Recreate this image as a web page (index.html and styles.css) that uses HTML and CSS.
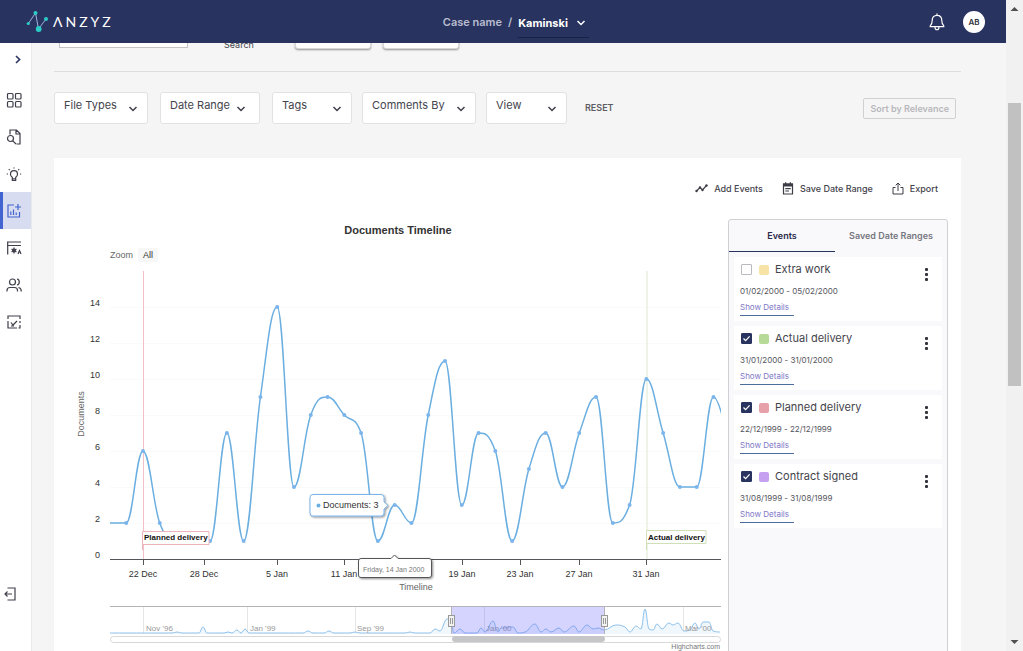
FILE: index.html
```html
<!DOCTYPE html>
<html lang="en">
<head>
<meta charset="utf-8">
<title>Anzyz – Timeline</title>
<link rel="stylesheet" href="styles.css">
</head>
<body>
<div class="app">
  <header class="topbar">
    <a class="logo" href="#" aria-label="Anzyz home">
      <svg class="logo-mark" width="23" height="23" viewBox="0 0 23 23" aria-hidden="true">
        <path d="M2 14 9.500 3 12.500 19 20 9" fill="none" stroke="#9db4d6" stroke-width="1"/>
        <g fill="#2bcbc8"><circle cx="2.300" cy="13.500" r="1.600"/><circle cx="9.500" cy="3" r="2"/><circle cx="12.700" cy="19" r="2.900"/><circle cx="20" cy="9" r="2"/></g>
      </svg>
      <span class="logo-text">ΛNZYZ</span>
    </a>
    <div class="crumbs">
      <label for="case">Case name</label>
      <span class="slash">/</span>
      <span class="case-pick">
        <select id="case"><option>Kaminski</option></select>
        <svg width="10" height="6" viewBox="0 0 10 6" aria-hidden="true"><path d="M1.500 1 5 4.500 8.500 1"/></svg>
      </span>
    </div>
    <div class="account">
      <button class="bell" aria-label="Notifications">
        <svg width="16" height="18" viewBox="0 0 16 18" fill="none" stroke="#fff" stroke-width="1.200" stroke-linecap="round" stroke-linejoin="round" aria-hidden="true"><path d="M8 .8v1.400M3.200 7.500C3.200 4.300 5 2.300 8 2.300s4.800 2 4.800 5.200c0 3.500 1 4.500 2 5.400v.8H1.200v-.8c1-.9 2-1.900 2-5.400zM6 14.200c0 1.600.8 2.500 2 2.500s2-.9 2-2.500"/></svg>
      </button>
      <button class="avatar" aria-label="Account">AB</button>
    </div>
  </header>

  <nav class="sidebar" aria-label="Sections">
    <button class="expand" aria-label="Expand menu"><svg width="6" height="9" viewBox="0 0 6 9"><path d="M1 1l3.600 3.500L1 8"/></svg></button>
    <a class="item" href="#" aria-label="Dashboard"><svg viewBox="0 0 16 16"><rect x="1.500" y="1.500" width="5.500" height="5.500" rx="1"/><rect x="9.500" y="1.500" width="5.500" height="5.500" rx="1"/><rect x="1.500" y="9.500" width="5.500" height="5.500" rx="1"/><rect x="9.500" y="9.500" width="5.500" height="5.500" rx="1"/></svg></a>
    <a class="item" href="#" aria-label="Document search"><svg viewBox="0 0 16 16"><path d="M4 5.500V1h6.500L14 4.500V15h-3.500M10 1v4h4M6.800 11.800 10 15"/><circle cx="4.500" cy="9.500" r="3"/></svg></a>
    <a class="item" href="#" aria-label="Insights"><svg viewBox="0 0 16 16"><path d="M6.300 11.300C5 10.500 4.500 9.500 4.500 8.200a3.500 3.500 0 0 1 7 0c0 1.300-.5 2.300-1.800 3.100v3.200H6.300zM6.300 12.800h3.400M8 1.500v1M2.800 3.200l.9.900M13.200 3.200l-.9.900M.8 8h1.200M14 8h1.200"/></svg></a>
    <a class="item active" href="#" aria-label="Timeline" aria-current="page"><svg viewBox="0 0 16 16"><path d="M8 2H2v12h11.500V9M4.800 8.500V12M7.500 6.500V12M10.200 9.500V12M12 1v6M9 4h6"/></svg></a>
    <a class="item" href="#" aria-label="Processing"><svg viewBox="0 0 16 16"><path d="M1 2h14M1 5.500h14M1.700 2v12.500M8 7.500v6M5.500 9l5 3M10.500 9l-5 3M12 14l1.500-3.500L15 14"/><circle cx="8" cy="10.500" r="1.300"/></svg></a>
    <a class="item" href="#" aria-label="People"><svg viewBox="0 0 16 16"><circle cx="6.500" cy="5" r="3"/><path d="M1 14.500v-1c0-2 1.500-3 3-3h4.500c1.500 0 3 1 3 3v1M11 2c3 .3 3 5.500 0 6M12.500 10.500c2 .4 2.800 1.500 2.800 4"/></svg></a>
    <a class="item" href="#" aria-label="Reports"><svg viewBox="0 0 16 16"><path d="M2 5V2h12v3M14 7v2M2 7v7h9M14 11v3h-1.500M5 8.500 7 11l4-4M5 12h3"/></svg></a>
    <a class="leave" href="#" aria-label="Log out"><svg viewBox="0 0 12 14"><path d="M3.500 1H11v12H3.500M8 7H1M3.500 4.500 1 7l2.500 2.500"/></svg></a>
  </nav>

  <main class="main">
    <div class="search-row">
      <input class="search-box" type="text" aria-label="Query">
      <span class="search-label">Search</span>
      <button class="raised" aria-label="Run search"></button>
      <button class="raised" aria-label="Clear search"></button>
    </div>

    <div class="filters">
      <span class="pick pick-types"><select aria-label="File Types"><option>File Types</option></select><svg viewBox="0 0 10 6"><path d="M1.500 1 5 4.500 8.500 1"/></svg></span>
      <span class="pick pick-range"><select aria-label="Date Range"><option>Date Range</option></select><svg viewBox="0 0 10 6"><path d="M1.500 1 5 4.500 8.500 1"/></svg></span>
      <span class="pick pick-tags"><select aria-label="Tags"><option>Tags</option></select><svg viewBox="0 0 10 6"><path d="M1.500 1 5 4.500 8.500 1"/></svg></span>
      <span class="pick pick-comments"><select aria-label="Comments By"><option>Comments By</option></select><svg viewBox="0 0 10 6"><path d="M1.500 1 5 4.500 8.500 1"/></svg></span>
      <span class="pick pick-view"><select aria-label="View"><option>View</option></select><svg viewBox="0 0 10 6"><path d="M1.500 1 5 4.500 8.500 1"/></svg></span>
      <button class="reset">RESET</button>
      <button class="sort" disabled>Sort by Relevance</button>
    </div>

    <section class="card">
      <div class="actions">
        <button><svg width="13" height="12" viewBox="0 0 13 12"><path d="M1.500 9 5 5.500 7.500 8 11.500 3.500" fill="none" stroke="#3c3c46" stroke-width="1.200"/><g fill="#3c3c46"><circle cx="1.500" cy="9" r="1.200"/><circle cx="5" cy="5.500" r="1.200"/><circle cx="7.500" cy="8" r="1.200"/><circle cx="11.500" cy="3.500" r="1.200"/></g></svg>Add Events</button>
        <button class="save"><svg width="12" height="13" viewBox="0 0 12 13"><path d="M1.500 2h9v10h-9z" fill="none" stroke="#3c3c46" stroke-width="1.200"/><path d="M1 1.500h10v3H1zM3 .3h1.200v2H3zM7.800.3H9v2H7.800z" fill="#3c3c46"/><path d="M3.300 6.700h5.400M3.300 9h3.700" stroke="#3c3c46" stroke-width="1.200"/></svg>Save Date Range</button>
        <button class="export"><svg width="12" height="13" viewBox="0 0 12 13" fill="none" stroke="#3c3c46"><path d="M3.500 5.500h-2.500v6.500h10V5.500H8.500M6 9V1.200M3.700 3.300 6 1l2.300 2.300"/></svg>Export</button>
      </div>

      <div class="columns">
        <svg class="chart" id="chart" viewBox="54 219 667 432" role="img" aria-label="Documents Timeline">
          <defs>
            <clipPath id="plot"><rect x="110" y="268" width="611" height="300"/></clipPath>
            <filter id="lift" x="-20%" y="-40%" width="140%" height="190%"><feDropShadow dx="1" dy="1" stdDeviation="1" flood-opacity=".45"/></filter>
          </defs>
          <text class="title" x="398" y="234">Documents Timeline</text>
          <text class="tick-label soft" x="110" y="258">Zoom</text>
          <rect x="138" y="248" width="20" height="14" rx="2" fill="#f7f7f7"/>
          <text class="tick-label strong middle" x="148" y="258">All</text>
          <g id="grid" stroke="#fafafa"></g>
          <path d="M143.500 271V559" stroke="#f3bfc8"/>
          <path d="M647 271V559" stroke="#dfe8d0"/>
          <path d="M110 559.500H721" stroke="#55555a"/>
          <g id="y-labels" class="tick-label end"></g>
          <g id="x-ticks" class="tick-label middle"></g>
          <text class="tick-label soft middle" transform="translate(84 414) rotate(-90)">Documents</text>
          <text class="tick-label soft middle" x="416" y="590">Timeline</text>
          <g clip-path="url(#plot)">
            <path id="series" fill="none" stroke="#6baee0" stroke-width="1.500"/>
            <g id="markers" fill="#7cb5ec"></g>
          </g>
          <g class="flag">
            <path d="M142.500 550V531.500H209V544.500H142.500" fill="#fff" stroke="#ecb3b8"/>
            <text x="144" y="540">Planned delivery</text>
            <path d="M646.500 550V530.500H706V543.500H646.500" fill="#fff" stroke="#cfe0b8"/>
            <text x="648" y="540">Actual delivery</text>
          </g>
          <g>
            <path d="M313 494.500H381q3 0 3 3V502l4 3.500-4 3.500v4q0 3-3 3H313q-3 0-3-3V497.500q0-3 3-3z" fill="#fff" stroke="#7cb5ec" filter="url(#lift)"/>
            <circle cx="318.500" cy="505.500" r="2" fill="#6baee0"/>
            <text class="tick-label" x="323" y="508">Documents: 3</text>
            <path d="M361 558.500H391l3.500-3.500 3.500 3.500H429q2.500 0 2.500 2.500V575q0 2.500-2.500 2.500H361q-2.500 0-2.500-2.500V561q0-2.500 2.500-2.500z" fill="#fff" stroke="#55555a" filter="url(#lift)"/>
            <text class="tiny" x="363" y="572">Friday, 14 Jan 2000</text>
          </g>
          <g>
            <path d="M143.500 607V634M247.500 607V634M355.500 607V634M484.500 607V634M683.500 607V634" stroke="#e6e6e6"/>
            <path id="nav-fill" fill="#f0f7fd"/>
            <path id="nav-line" fill="none" stroke="#8fc1ea"/>
            <g class="nav-label">
              <text x="146" y="631">Nov '96</text><text x="250" y="631">Jan '99</text><text x="357" y="631">Sep '99</text><text x="486" y="631">Jan '00</text><text x="685" y="631">Mar '00</text>
            </g>
            <rect x="451" y="607" width="154" height="27" fill="#6666ff" fill-opacity=".28"/>
            <path d="M110 606.500H721M451.500 606V634M604.500 606V634" stroke="#b3b3b8" fill="none"/>
            <rect x="110.500" y="636.500" width="610" height="6" rx="3" fill="#fff" stroke="#d8d8d8"/>
            <rect x="452" y="636" width="153" height="6" rx="3" fill="#c6c6c8"/>
            <g fill="#f2f2f2" stroke="#999">
              <rect x="448.500" y="615.500" width="6" height="11"/><rect x="601.500" y="615.500" width="6" height="11"/>
              <path d="M450.500 618v6M452.500 618v6M603.500 618v6M605.500 618v6"/>
            </g>
            <text class="tiny end" x="720" y="649">Highcharts.com</text>
          </g>
        </svg>

        <aside class="events">
          <div class="tabs" role="tablist">
            <button role="tab" aria-selected="true">Events</button>
            <button role="tab" aria-selected="false">Saved Date Ranges</button>
          </div>
          <ul class="event-list">
            <li class="event">
              <div><label class="name"><input type="checkbox"><i class="swatch yellow"></i>Extra work</label>
              <p class="dates">01/02/2000 - 05/02/2000</p><a class="details" href="#">Show Details</a></div>
              <button class="kebab" aria-label="More options for Extra work"><i></i><i></i><i></i></button>
            </li>
            <li class="event">
              <div><label class="name"><input type="checkbox" checked><i class="swatch green"></i>Actual delivery</label>
              <p class="dates">31/01/2000 - 31/01/2000</p><a class="details" href="#">Show Details</a></div>
              <button class="kebab" aria-label="More options for Actual delivery"><i></i><i></i><i></i></button>
            </li>
            <li class="event">
              <div><label class="name"><input type="checkbox" checked><i class="swatch red"></i>Planned delivery</label>
              <p class="dates">22/12/1999 - 22/12/1999</p><a class="details" href="#">Show Details</a></div>
              <button class="kebab" aria-label="More options for Planned delivery"><i></i><i></i><i></i></button>
            </li>
            <li class="event">
              <div><label class="name"><input type="checkbox" checked><i class="swatch purple"></i>Contract signed</label>
              <p class="dates">31/08/1999 - 31/08/1999</p><a class="details" href="#">Show Details</a></div>
              <button class="kebab" aria-label="More options for Contract signed"><i></i><i></i><i></i></button>
            </li>
          </ul>
        </aside>
      </div>
    </section>
  </main>

  <div class="scrollbar" aria-hidden="true">
    <svg viewBox="0 0 17 17"><path d="M4.500 11 8.500 7l4 4z"/></svg>
    <span class="before"></span><span class="thumb"></span><span class="after"></span>
    <svg viewBox="0 0 17 17"><path d="M4.500 6 8.500 10l4-4z"/></svg>
  </div>
</div>
<script src="chart.js"></script>
</body>
</html>
```

FILE: styles.css
```css
* { box-sizing: border-box; }

body {
  margin: 0;
  font-family: Inter, "Liberation Sans", sans-serif;
  color: #44444c;
  background: #f5f5f5;
}

button, select, input { font: inherit; color: inherit; }
button { padding: 0; border: 0; background: none; cursor: pointer; }
a { color: inherit; text-decoration: none; }
svg { display: block; flex: none; }

.app {
  display: grid;
  grid-template: 43px minmax(0, 1fr) / 32px minmax(0, 1fr) 17px;
  height: 100vh;
}

/* Top bar */
.topbar {
  grid-column: 1 / 3;
  display: grid;
  grid-template-columns: 1fr auto 1fr;
  align-items: center;
  padding-left: 26px;
  background: #29335f;
  color: #fff;
  z-index: 1;
}
.logo { display: flex; align-items: center; gap: 4px; }
.logo-text { font: 14px/20px Lato, sans-serif; letter-spacing: 3px; }
.crumbs { display: flex; align-items: center; gap: 6px; font-size: 11px; font-weight: 600; line-height: 16px; }
.crumbs label, .slash { color: #b9bdd0; }
.case-pick {
  display: flex;
  align-items: center;
  gap: 8px;
  padding: 6px 3px 6px 0;
  border-bottom: 1px solid #1a2145;
  margin-top: 4px;
}
.case-pick select, .pick select { appearance: none; border: 0; padding: 0; background: none; outline: 0; }
.case-pick select { font-weight: 700; color: #fff; }
.case-pick svg { fill: none; stroke: #fff; stroke-width: 1.5; pointer-events: none; }
.account { display: flex; justify-content: flex-end; align-items: center; gap: 18px; padding-right: 21px; }
.avatar { width: 22px; height: 22px; border-radius: 50%; background: #fff; color: #33333d; font-size: 8px; font-weight: 600; }

/* Side navigation */
.sidebar {
  display: flex;
  flex-direction: column;
  background: #fff;
  border-right: 1px solid #e9e9ec;
}
.sidebar svg { fill: none; stroke: #3f3f4b; stroke-width: 1.2; }
.expand { display: flex; align-items: center; height: 32px; margin-bottom: 6px; padding-left: 15px; }
.expand svg { stroke: #29335f; stroke-width: 1.6; }
.item { display: flex; align-items: center; height: 37px; padding-left: 6px; }
.item svg { width: 16px; height: 16px; }
.item.active { padding-left: 3px; border-left: 3px solid #4264d0; background: #d7dcf0; }
.item.active svg { stroke: #4264d0; }
.leave { margin: auto 0 50px 4px; }
.leave svg { width: 12px; height: 14px; }

/* Main column */
.main { overflow-y: auto; scrollbar-width: none; padding: 0 45px 0 22px; }

.search-row {
  display: flex;
  align-items: flex-end;
  height: 29px;
  padding: 0 0 22px 5px;
  border-bottom: 1px solid #dedede;
}
.search-box { width: 129px; height: 30px; border: 1px solid #c4c4c8; background: #fff; margin-bottom: 1px; }
.search-label { margin: 0 41px 0 36px; font-size: 9px; line-height: 12px; margin-bottom: -2px; }
.raised { width: 76px; height: 30px; border: 1px solid #d8d8d8; border-radius: 3px; background: #fff; box-shadow: 0 1px 2px #0006; }
.raised + .raised { margin-left: 12px; }

.filters { display: flex; align-items: center; gap: 10px; padding: 20px 5px 34px 0; }
.pick {
  display: flex;
  align-items: center;
  height: 32px;
  padding: 0 9px;
  border: 1px solid #e2e2e4;
  border-radius: 3px;
  background: #fff;
  font-size: 11px;
  line-height: 16px;
}
.pick select { flex: 1; min-width: 0; margin-bottom: 6px; }
.pick svg { width: 10px; height: 6px; margin-top: 2px; fill: none; stroke: #3f3f4b; stroke-width: 1.5; pointer-events: none; }
.pick-types { width: 94px; margin-right: 2px; }
.pick-range { width: 100px; margin-right: 2px; padding-right: 13px; }
.pick-tags { width: 80px; }
.pick-comments { width: 114px; }
.pick-view { width: 81px; }
.reset { margin-left: 8px; font-size: 9px; font-weight: 600; line-height: 12px; color: #5c5c64; }
.sort {
  margin-left: auto;
  height: 21px;
  padding: 0 6px;
  border: 1px solid #d0d0d2;
  border-radius: 2px;
  font-size: 9px;
  font-weight: 600;
  color: #b8b8bc;
}

.card { padding: 20px 13px 20px 0; background: #fff; }
.actions { display: flex; justify-content: flex-end; gap: 19px; padding: 0 10px 21px 0; }
.actions button { display: flex; align-items: center; gap: 6px; height: 20px; font-size: 9px; font-weight: 500; }
.columns { display: flex; align-items: flex-start; gap: 7px; }
.chart { flex: 1; min-width: 0; }

/* Chart */
.chart text { font-family: "Liberation Sans", Arial, sans-serif; }
.title { font-size: 11px; font-weight: 700; fill: #333; text-anchor: middle; }
.tick-label { font-size: 9px; fill: #333; }
.soft { fill: #666; }
.tiny { font-size: 7px; fill: #777; }
.middle { text-anchor: middle; }
.end { text-anchor: end; }
.flag { font-size: 8px; font-weight: 700; }
.flag text { fill: #111; }
.nav-label { font-size: 8px; fill: #999; }

/* Events */
.events {
  flex: 0 0 220px;
  min-height: 460px;
  border: 1px solid #cfcfd4;
  border-radius: 3px;
  background: #f9f9fb;
}
.tabs { display: grid; grid-template-columns: 106px 1fr; height: 32px; }
.tabs button { font-size: 9px; font-weight: 600; color: #77777f; border-bottom: 1px solid transparent; }
.tabs [aria-selected="true"] { color: #29294a; border-color: #29335f; }
.event-list { display: grid; gap: 5px; margin: 0; padding: 5px; list-style: none; }
.event { display: flex; justify-content: space-between; align-items: flex-start; padding: 4px 6px 5px; background: #fff; }
.name { display: flex; align-items: center; font-size: 11px; line-height: 16px; }
.name input {
  appearance: none;
  width: 11px;
  height: 11px;
  margin: 1px 7px 0 1px;
  border: 1px solid #b9b9c0;
  border-radius: 1px;
  background: #fff;
}
.name input:checked {
  border-color: #29335f;
  background: #29335f url("data:image/svg+xml,%3Csvg xmlns='http://www.w3.org/2000/svg' viewBox='0 0 9 9'%3E%3Cpath d='M1.500 4.500 3.600 6.700 7.600 2.300' fill='none' stroke='white' stroke-width='1.200'/%3E%3C/svg%3E");
}
.swatch { width: 10px; height: 10px; margin: 1px 6px 0 0; border-radius: 2px; }
.yellow { background: #f8e3a6; }
.green { background: #b8da98; }
.red { background: #e6a0a8; }
.purple { background: #c5a0f0; }
.dates { margin: 8px 0 4px; font-size: 8px; line-height: 12px; color: #55555d; }
.details {
  display: block;
  width: 54px;
  padding-bottom: 2px;
  border-bottom: 1px solid #4c6c9c;
  font-size: 8px;
  line-height: 12px;
  color: #8078c8;
}
.kebab { display: grid; justify-content: center; align-content: center; gap: 2px; width: 20px; height: 20px; margin-top: 3px; }
.kebab i { width: 3px; height: 3px; border-radius: 1px; background: #33333b; }

/* Window scrollbar */
.scrollbar { grid-area: 1 / 3 / 3 / 4; display: flex; flex-direction: column; background: #f1f1f1; }
.scrollbar svg { width: 17px; height: 17px; fill: #505050; }
.before { flex: 86; }
.thumb { flex: 283; margin: 0 2px; background: #c1c1c1; }
.after { flex: 248; }
```

FILE: chart.js
```js
const NS = "http://www.w3.org/2000/svg";

function add(parent, tag, attrs, text) {
  const node = document.createElementNS(NS, tag);
  for (const key in attrs) node.setAttribute(key, attrs[key]);
  if (text !== undefined) node.textContent = text;
  document.getElementById(parent).appendChild(node);
}

/* Smooth line through the points that never overshoots a local extreme. */
function spline(points) {
  const controls = points.map(([x, y], i) => {
    const last = points[i - 1], next = points[i + 1];
    if (!last || !next) return { left: [x, y], right: [x, y] };
    const lx = (1.5 * x + last[0]) / 2.5, rx = (1.5 * x + next[0]) / 2.5;
    let ly = (1.5 * y + last[1]) / 2.5, ry = (1.5 * y + next[1]) / 2.5;
    const shift = ((ry - ly) * (rx - x)) / (rx - lx) + y - ry;
    ly += shift;
    ry += shift;
    if (ly > last[1] && ly > y) { ly = Math.max(last[1], y); ry = 2 * y - ly; }
    else if (ly < last[1] && ly < y) { ly = Math.min(last[1], y); ry = 2 * y - ly; }
    if (ry > next[1] && ry > y) { ry = Math.max(next[1], y); ly = 2 * y - ry; }
    else if (ry < next[1] && ry < y) { ry = Math.min(next[1], y); ly = 2 * y - ry; }
    return { left: [lx, ly], right: [rx, ry] };
  });
  let d = "M" + points[0];
  for (let i = 1; i < points.length; i++) {
    d += "C" + controls[i - 1].right + " " + controls[i].left + " " + points[i];
  }
  return d;
}

const counts = [2, 2, 6, 2, 1, 1, 1, 7, 1, 9, 14, 4, 8, 9, 8, 7, 1, 3, 2, 8, 11, 3, 7, 6, 1, 5, 7, 4, 7, 9, 2, 3, 10, 7, 4, 4, 9, 6];
const points = counts.map((n, i) => [109.4 + 16.78 * i, 559 - 18 * n]);
document.getElementById("series").setAttribute("d", spline(points));
points.slice(1).forEach(([cx, cy]) => add("markers", "circle", { cx, cy, r: 2 }));

for (let n = 0; n <= 14; n += 2) {
  add("y-labels", "text", { x: 100, y: 558 - 18 * n }, n);
  if (n) add("grid", "path", { d: `M110 ${559.5 - 18 * n}H721` });
}

[["22 Dec", 143], ["28 Dec", 204], ["5 Jan", 277], ["11 Jan", 344], ["19 Jan", 462], ["23 Jan", 520], ["27 Jan", 579], ["31 Jan", 646]].forEach(([label, x]) => {
  add("x-ticks", "path", { d: `M${x + 0.5} 559v6`, stroke: "#55555a" });
  add("x-ticks", "text", { x, y: 577 }, label);
});

const overview = [[110, 0], [172, 0], [177, 1], [182, 0], [199, 0], [203, 6], [207, 0], [224, 0], [228, 1], [232, 0], [237, 3], [241, 0], [245, 4], [249, 0], [303, 0], [308, 2], [313, 0], [324, 0], [329, 2], [334, 0], [350, 0], [355, 1], [360, 0], [405, 0], [410, 1], [415, 0], [430, 0], [435, 4], [440, 2], [447, 14], [451, 12], [454, 0], [460, 4], [465, 0], [477, 0], [481, 5], [485, 1], [493, 12], [498, 1], [501, 5], [505, 5], [508, 6], [513, 6], [518, 0], [525, 1], [535, 9], [541, 1], [546, 4], [551, 1], [559, 5], [564, 1], [574, 7], [579, 1], [587, 8], [593, 4], [598, 5], [604, 3], [616, 8], [625, 6], [630, 1], [636, 7], [641, 4], [645, 24], [649, 4], [653, 3], [657, 9], [662, 4], [669, 10], [673, 8], [678, 10], [684, 2], [690, 3], [695, 10], [699, 4], [703, 11], [709, 11], [713, 2], [720, 1]].map(([x, h]) => [x, 633 - h]);
const line = spline(overview);
document.getElementById("nav-line").setAttribute("d", line);
document.getElementById("nav-fill").setAttribute("d", line + "V634H110Z");
```
